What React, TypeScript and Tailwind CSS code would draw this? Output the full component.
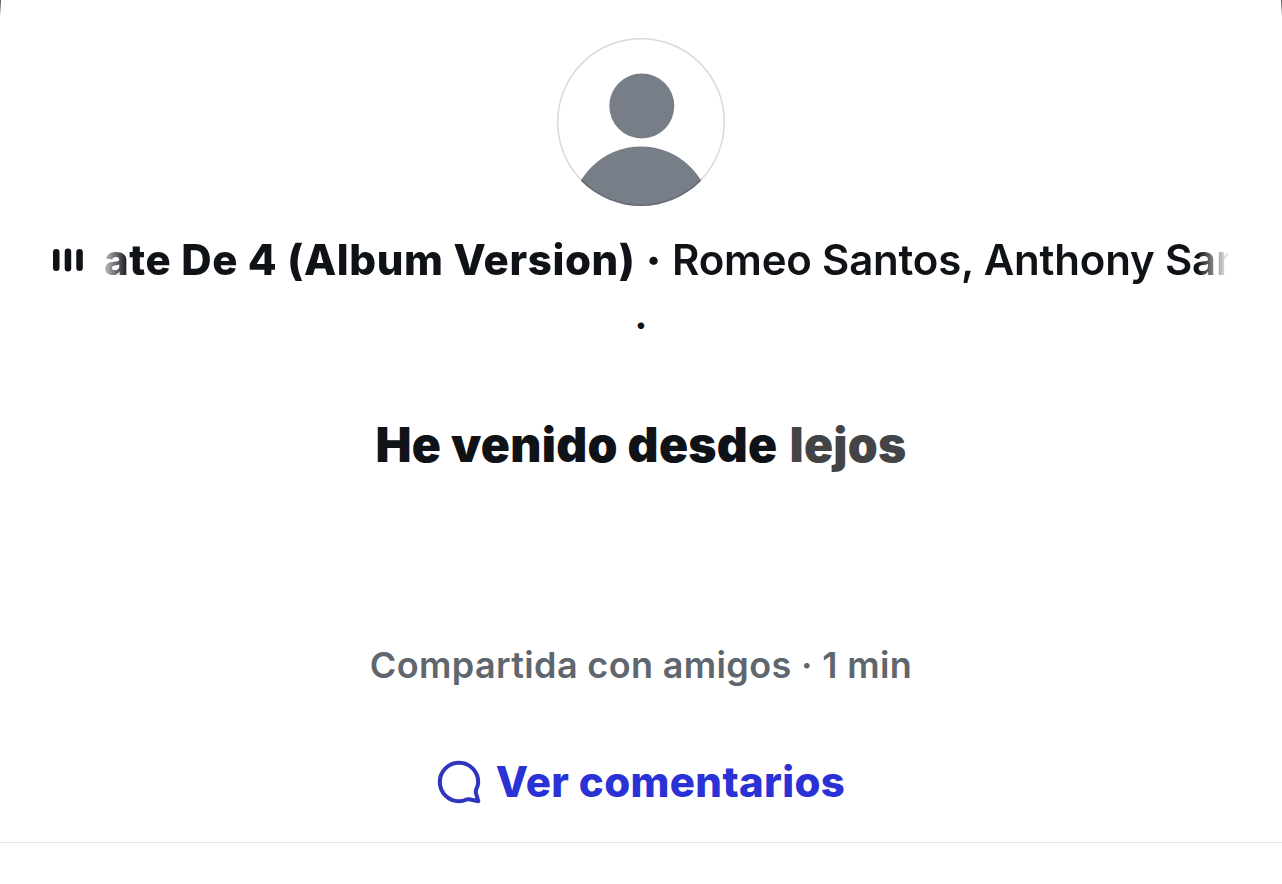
export default function App() {
  return (
    <main className="relative flex h-[884px] w-[1282px] flex-col items-center overflow-hidden bg-white font-['Inter',sans-serif] text-[#0f1216]">
      <div className="absolute top-0 left-0 h-[16px] w-px bg-linear-to-b from-[#555] to-white" />
      <div className="absolute top-0 right-0 h-[16px] w-px bg-linear-to-b from-[#555] to-white" />
      <svg className="mt-[37px] h-[170px] w-[170px] shrink-0" viewBox="556 37 170 170" aria-hidden="true">
        <defs><clipPath id="avatar"><circle cx="641" cy="122" r="84" /></clipPath></defs>
        <g clipPath="url(#avatar)" fill="#787e87">
          <circle cx="641.8" cy="106" r="32.5" />
          <circle cx="641" cy="216.5" r="70" />
        </g>
        <circle cx="641" cy="122" r="83.3" fill="none" stroke="#000" strokeOpacity=".15" strokeWidth="1.5" />
      </svg>
      <div className="mt-[28px] flex h-[50px] w-[1178px] items-center">
        <svg className="h-[24px] w-[32px] shrink-0" viewBox="0 0 32 24" aria-hidden="true">
          <g fill="#0f1216"><rect x="1" y="1" width="6.5" height="22" rx="3.2" /><rect x="12.7" y="0.5" width="6.5" height="23" rx="3.2" /><rect x="24.3" y="1" width="6.5" height="22" rx="3.2" /></g>
        </svg>
        <div className="ml-[20px] flex h-[50px] grow items-center overflow-hidden whitespace-pre text-[42px] leading-[50px] [mask-image:linear-gradient(to_right,transparent_-8px,black_24px,black_calc(100%-32px),transparent)]">
          <span className="w-[531px] shrink-0 font-extrabold tracking-[0.62px]">ate De 4 (Album Version)</span>
          <span className="w-[37px] shrink-0 text-center font-black">·</span>
          <span className="font-semibold tracking-[-0.2px]">Romeo Santos, Anthony Santos</span>
        </div>
      </div>
      <div className="mt-[4px] text-[42px] leading-[50px] font-semibold">.</div>
      <div className="mt-[77px] text-[48px] leading-[58px] font-black tracking-[0.3px]">He venido desde <span className="ml-[2px] text-[#424446]">lejos</span></div>
      <div className="mt-[169px] text-[36px] leading-[44px] font-semibold tracking-[0.35px] text-[#60666d]">Compartida con amigos · 1 min</div>
      <div className="mt-[70px] flex items-center gap-[15px] text-[42px] leading-[50px] font-extrabold text-[#2a31d5]">
        <svg className="h-[44px] w-[44px] text-[#2f35bd]" viewBox="0 0 44 44" fill="none" stroke="currentColor" strokeWidth="4" strokeLinejoin="round" aria-hidden="true"><path d="M22 2.8C11.4 2.8 2.8 11.4 2.8 22S11.4 41.2 22 41.2c2.6 0 4.8-.5 7-1.5 1.2-.5 2.1-.7 3.4-.4l8.9 1.9-2.3-8c-.4-1.5-.3-2.5.3-4 1.2-2.4 1.9-4.6 1.9-7.2C41.2 11.4 32.6 2.8 22 2.8Z" /></svg>
        <span className="tracking-[0.35px]">Ver comentarios</span>
      </div>
      <div className="mt-[35px] h-px w-full bg-[#e2e3e4]" />
    </main>
  );
}
